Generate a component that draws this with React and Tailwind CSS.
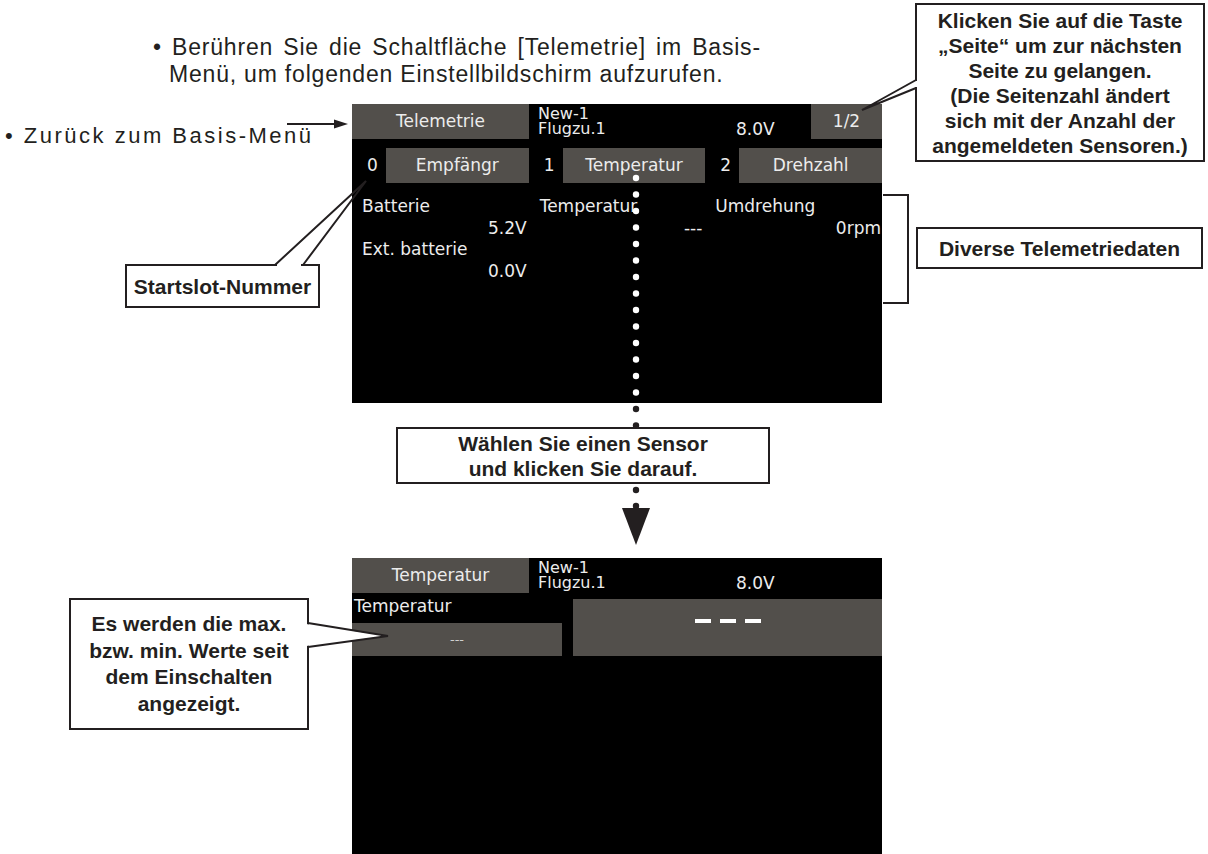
const GRAY = "bg-[#524f4b]";

const dotsY = Array.from({ length: 16 }, (_, i) => 178 + i * 16.5);

function Header({ title, page }) {
  return (
    <div className="flex h-[35px]">
      <div className={`w-[177px] ${GRAY} flex items-center justify-center`}>{title}</div>
      <div className="flex flex-1">
        <div className="w-[207px] pl-[9px] pt-[2px] text-[16px] leading-[15px]">
          <div>New-1</div>
          <div>Flugzu.1</div>
        </div>
        <div className="self-end pb-[1px] leading-none">8.0V</div>
      </div>
      {page ? (
        <div className={`w-[71px] ${GRAY} flex items-center justify-center`}>{page}</div>
      ) : (
        <div className="w-[71px]" />
      )}
    </div>
  );
}

function Callout({ className, children }) {
  return (
    <div
      className={`absolute flex items-center justify-center border-2 border-[#231f20] bg-white text-center font-['Liberation_Sans',Arial,sans-serif] text-[21px] font-bold text-[#231f20] ${className}`}
    >
      <div>{children}</div>
    </div>
  );
}

export default function App() {
  const tabs = [
    ["0", "Empfängr"],
    ["1", "Temperatur"],
    ["2", "Drehzahl"],
  ];

  return (
    <div className="relative h-[854px] w-[1208px] overflow-hidden bg-white font-['Liberation_Sans',Arial,sans-serif] text-[#231f20]">
      {/* instructions */}
      <div className="pl-[153px] pt-[34px] text-[23px] leading-[27px] tracking-[0.8px]">
        <div className="[word-spacing:3px]">• Berühren Sie die Schaltfläche [Telemetrie] im Basis-</div>
        <div className="pl-[16px]">Menü, um folgenden Einstellbildschirm aufzurufen.</div>
      </div>
      <div className="pl-[5px] pt-[36px] text-[22px] leading-[24px] tracking-[2.5px]">• Zurück zum Basis-Menü</div>

      {/* screen 1 */}
      <div className="absolute left-[352px] top-[104px] h-[299px] w-[530px] bg-black font-['DejaVu_Sans',sans-serif] text-[17px] text-[#ececec]">
        <Header title="Telemetrie" page="1/2" />

        <div className="mt-[9px] grid h-[35px] grid-cols-3">
          {tabs.map(([n, label]) => (
            <div key={n} className="flex items-stretch">
              <span className="flex w-[34px] items-center pl-[15px]">{n}</span>
              <div className={`flex flex-1 items-center justify-center ${GRAY}`}>{label}</div>
            </div>
          ))}
        </div>

        <div className="mt-[13px] grid grid-cols-3 leading-[21.5px]">
          <div className="pl-[10px] pr-[2px]">
            <div>Batterie</div>
            <div className="text-right">5.2V</div>
            <div>Ext. batterie</div>
            <div className="text-right">0.0V</div>
          </div>
          <div className="pl-[11px] pr-[3px]">
            <div>Temperatur</div>
            <div className="text-right">---</div>
          </div>
          <div className="pl-[10px] pr-[1px]">
            <div>Umdrehung</div>
            <div className="text-right">0rpm</div>
          </div>
        </div>
      </div>

      {/* screen 2 */}
      <div className="absolute left-[352px] top-[558px] h-[299px] w-[530px] bg-black font-['DejaVu_Sans',sans-serif] text-[17px] text-[#ececec]">
        <Header title="Temperatur" />
        <div className="flex">
          <div className="w-[210px]">
            <div className="mt-[2px] pl-[2px] leading-[22px]">Temperatur</div>
            <div className={`mt-[6px] flex h-[33px] items-center justify-center text-[13px] text-[#d0d0d0] ${GRAY}`}>---</div>
          </div>
          <div className={`ml-[11px] mt-[6px] flex h-[57px] flex-1 justify-center pt-[20px] ${GRAY}`}>
            <div className="flex h-[4px] gap-[9px]">
              <div className="w-[16px] bg-white" />
              <div className="w-[16px] bg-white" />
              <div className="w-[16px] bg-white" />
            </div>
          </div>
        </div>
      </div>

      {/* callouts */}
      <Callout className="left-[915px] top-[3px] h-[159px] w-[290px] leading-[25px]">
        Klicken Sie auf die Taste
        <br />„Seite“ um zur nächsten
        <br />Seite zu gelangen.
        <br />(Die Seitenzahl ändert
        <br />sich mit der Anzahl der
        <br />angemeldeten Sensoren.)
      </Callout>
      <Callout className="left-[916px] top-[227px] h-[42px] w-[287px] leading-[25px]">Diverse Telemetriedaten</Callout>
      <Callout className="left-[125px] top-[264px] h-[44px] w-[195px] leading-[25px]">Startslot-Nummer</Callout>
      <Callout className="left-[396px] top-[427px] h-[57px] w-[374px] leading-[25px]">
        Wählen Sie einen Sensor
        <br />und klicken Sie darauf.
      </Callout>
      <Callout className="left-[69px] top-[598px] h-[132px] w-[240px] leading-[26.5px]">
        Es werden die max.
        <br />bzw. min. Werte seit
        <br />dem Einschalten
        <br />angezeigt.
      </Callout>

      {/* leader lines, dots, arrows */}
      <svg className="pointer-events-none absolute left-0 top-0" width="1208" height="854" viewBox="0 0 1208 854">
        <line x1="287" y1="124" x2="336" y2="124" stroke="#231f20" strokeWidth="2" />
        <polygon points="334,119.5 348,124 334,128.5" fill="#231f20" />

        <line x1="277" y1="265" x2="301" y2="265" stroke="#fff" strokeWidth="3" />
        <polyline points="275,265 366,181 303,265" fill="none" stroke="#231f20" strokeWidth="2" />

        <line x1="916" y1="81" x2="916" y2="87" stroke="#fff" strokeWidth="3" />
        <polyline points="916,80 862,110 916,88" fill="none" stroke="#231f20" strokeWidth="2" />

        <polyline points="883,195 908,195 908,303 883,303" fill="none" stroke="#231f20" strokeWidth="2" />

        <polygon points="306,624 388,636 306,646" fill="#fff" />
        <polyline points="308,623 388,636 308,647" fill="none" stroke="#231f20" strokeWidth="2" />

        {dotsY.map((y) => (
          <circle key={y} cx="636" cy={y} r="3.2" fill={y < 403 ? "#fff" : "#231f20"} />
        ))}
        <circle cx="636" cy="490" r="3.2" fill="#231f20" />
        <circle cx="636" cy="506" r="3.2" fill="#231f20" />
        <polygon points="622,508 650,508 636,545" fill="#231f20" />
      </svg>
    </div>
  );
}
